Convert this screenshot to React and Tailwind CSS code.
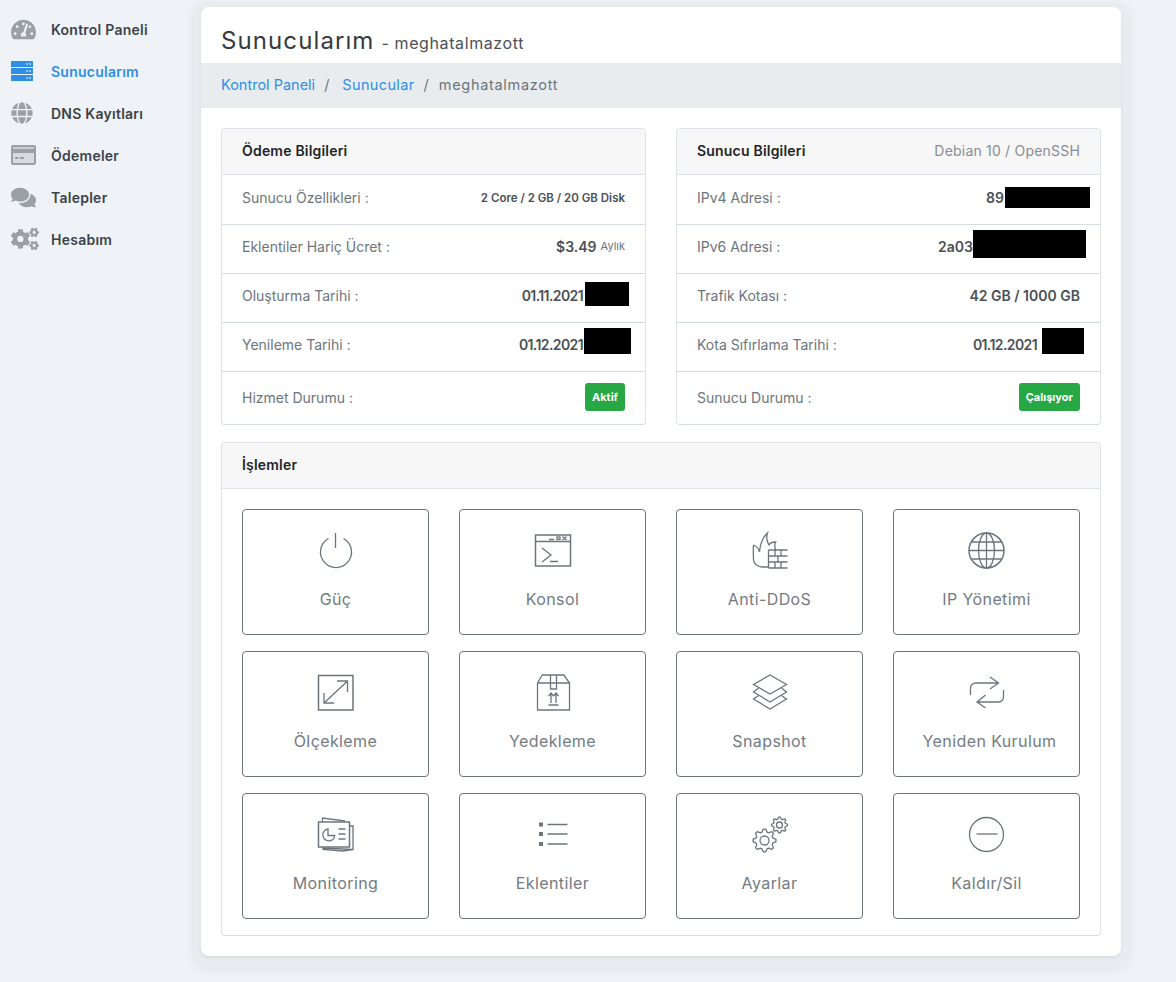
import { FaTachometerAlt, FaGlobe, FaComments, FaCogs } from 'react-icons/fa';

const font = 'font-["Inter","Liberation_Sans",sans-serif]';

const Icon = ({ children }) => (
  <svg width="40" height="40" viewBox="0 0 40 40" fill="none" stroke="#6c757d" strokeWidth="1.3" className="block">
    {children}
  </svg>
);

const gear = (cx, cy, r, teeth) => {
  const pts = [];
  for (let i = 0; i < teeth * 4; i++) {
    const a = (i / (teeth * 4)) * Math.PI * 2 - Math.PI / teeth / 4;
    const rad = i % 4 < 2 ? r : r * 0.76;
    pts.push(`${(cx + rad * Math.cos(a)).toFixed(2)},${(cy + rad * Math.sin(a)).toFixed(2)}`);
  }
  return pts.join(' ');
};

const icons = {
  power: (
    <Icon>
      <path d="M12.500 7.500A15.500 15.500 0 1 0 27.500 7.500" />
      <path d="M19.500 2v15" />
    </Icon>
  ),
  console: (
    <Icon>
      <rect x="2.500" y="4" width="35" height="31" strokeWidth="1.500" />
      <path d="M2.500 10.500h35M9 17l9 7-9 7M17 30.500h8" />
      <path d="M16 8.500h5M29.500 5.500l4 3.500M33.500 5.500l-4 3.500" />
      <rect x="24" y="6" width="3" height="2.500" />
    </Icon>
  ),
  ddos: (
    <Icon>
      <path d="M3.500 14C3 20 3.500 26 3.500 29C4 33 8 36 12 36H18.500" />
      <path d="M3.500 14C6 15 9 18 9.500 21C10 15 12 7 17.500 2C16 7 17 11 19 14C20 12 22 11 25.500 11C24 13 25 16 25.500 19" />
      <path d="M18.500 19h19M18.500 25h19M18.500 31h19M18.500 37h19M18.500 19v18M25 19v6M31 19v6M28 25v6M25 31v6M31 31v6" />
    </Icon>
  ),
  globe: (
    <Icon>
      <circle cx="19.500" cy="19.500" r="17.500" strokeWidth="1.500" />
      <ellipse cx="19.500" cy="19.500" rx="8" ry="17.500" />
      <path d="M19.500 2v35M2 19.500h35M4.500 11h30M4.500 28h30" />
    </Icon>
  ),
  scale: (
    <Icon>
      <rect x="2.500" y="2.500" width="34.500" height="34.500" strokeWidth="1.500" />
      <path d="M8 30 31.500 8M21 8h10.500v11M8 20v10h10" />
    </Icon>
  ),
  backup: (
    <Icon>
      <path d="M4.500 10 9.200 2h21.600l5.700 8v27h-32zM4.500 10h32" strokeLinejoin="round" />
      <path d="M17.500 2v14h6V2M15.500 32h10M18 30V20M15.500 23l2.500-3 2.500 3M23 30V20M20.500 23l2.500-3 2.500 3" />
    </Icon>
  ),
  layers: (
    <Icon>
      <path d="M20 2 36.500 11.500 20 21 3.500 11.500z" />
      <path d="M8.500 15 3.500 19 20 29 36.500 19 31.500 15" />
      <path d="M8.500 22.500 3.500 26 20 36 36.500 26 31.500 22.500" />
    </Icon>
  ),
  repeat: (
    <Icon>
      <path d="M3.500 22V15a5 5 0 0 1 5-5H31.500M23 4l8.500 6-8.500 6" />
      <path d="M36.500 17V24a5 5 0 0 1-5 5H10M18.500 22l-8.500 7 8.500 6" />
    </Icon>
  ),
  monitoring: (
    <Icon>
      <path d="M6.500 7V3L29 6M33.500 11H37V34.500L7 33v1.500l19.500 1.500L37 34.500" />
      <path d="M2.500 7h31v25h-31z" strokeWidth="1.500" />
      <path d="M12 14a6 6 0 1 0 6.800 6.500H12z" />
      <path d="M22.500 14h7M22.500 19h7M22.500 24h7" />
    </Icon>
  ),
  list: (
    <Icon>
      <rect x="6" y="7.500" width="4" height="4" fill="#6c757d" stroke="none" />
      <rect x="6" y="17" width="4" height="4" fill="#6c757d" stroke="none" />
      <rect x="6" y="27" width="4" height="4" fill="#6c757d" stroke="none" />
      <path d="M14.500 9.500h20M14.500 19h20M14.500 29h20" />
    </Icon>
  ),
  settings: (
    <Icon>
      <polygon points={gear(14.5, 25.5, 11.5, 8)} strokeLinejoin="round" />
      <circle cx="14.500" cy="25.500" r="4.500" />
      <polygon points={gear(29.5, 10, 8, 8)} strokeLinejoin="round" />
      <circle cx="29.500" cy="10" r="3" />
    </Icon>
  ),
  remove: (
    <Icon>
      <circle cx="19.500" cy="19.500" r="17" />
      <path d="M9.500 19h21" />
    </Icon>
  ),
};

const ServerIcon = () => (
  <svg width="22" height="20" viewBox="0 0 22 20" className="block">
    <g fill="#2f8fe8">
      <rect x="0" y="0" width="22" height="6" rx="0.500" />
      <rect x="0" y="7" width="22" height="6" rx="0.500" />
      <rect x="0" y="14" width="22" height="6" rx="0.500" />
    </g>
    <path d="M15 3h2M18 3h2M15 10h2M18 10h2M15 17h2M18 17h2" stroke="#fff" strokeWidth="1" />
  </svg>
);

const CardIcon = () => (
  <svg width="25" height="20" viewBox="0 0 25 20" className="block">
    <rect x="0" y="0" width="25" height="20" rx="2" fill="#9aa0a6" />
    <rect x="2" y="2" width="21" height="2" fill="#c9ced3" />
    <rect x="2" y="8" width="21" height="10" fill="#d7dade" />
    <path d="M4 12h3.500v2H4zM9 12h4v2H9z" fill="#9aa0a6" />
  </svg>
);

const navItems = [
  { label: 'Kontrol Paneli', icon: <FaTachometerAlt size={25} color="#9aa0a6" /> },
  { label: 'Sunucularım', icon: <ServerIcon />, active: true },
  { label: 'DNS Kayıtları', icon: <FaGlobe size={22} color="#9aa0a6" /> },
  { label: 'Ödemeler', icon: <CardIcon /> },
  { label: 'Talepler', icon: <FaComments size={25} color="#9aa0a6" /> },
  { label: 'Hesabım', icon: <FaCogs size={28} color="#9aa0a6" /> },
];

const tiles = [
  ['Güç', 'power'],
  ['Konsol', 'console'],
  ['Anti-DDoS', 'ddos'],
  ['IP Yönetimi', 'globe'],
  ['Ölçekleme', 'scale'],
  ['Yedekleme', 'backup'],
  ['Snapshot', 'layers'],
  ['Yeniden Kurulum', 'repeat', 'ml-[6px]'],
  ['Monitoring', 'monitoring'],
  ['Eklentiler', 'list'],
  ['Ayarlar', 'settings'],
  ['Kaldır/Sil', 'remove'],
];

const Row = ({ label, children, last, first }) => (
  <div
    className={`flex items-center justify-between px-5 ${
      last ? 'h-[52px] pb-[2px]' : `${first ? 'h-[50px]' : 'h-[49px]'} border-b border-[#d3dbe6] pb-[5px]`
    }`}
  >
    <span className="text-[14px] text-[#6c757d]">{label}</span>
    <div className="flex items-center">{children}</div>
  </div>
);

const Value = ({ children, date }) => (
  <span className={`text-[14px] font-semibold text-[#495057] ${date ? 'tracking-[-0.6px]' : ''}`}>{children}</span>
);

const Badge = ({ children }) => (
  <span className="rounded-[3px] bg-[#28a745] px-[7px] py-[7px] text-[11px] leading-[14px] font-bold text-white">{children}</span>
);

const Panel = ({ title, right, children }) => (
  <div className="overflow-hidden rounded-[4px] border border-[#dfe3e8] border-b-[#d3dbe6] bg-white">
    <div className="flex h-[46px] items-center justify-between border-b border-[#dfe3e8] bg-[#f7f7f7] px-5 pb-[2px]">
      <span className="text-[14px] font-semibold tracking-[0.2px] text-[#212529]">{title}</span>
      {right && <span className="text-[14px] tracking-[0.2px] text-[#868e96]">{right}</span>}
    </div>
    {children}
  </div>
);

export default function App() {
  return (
    <div className={`flex h-[982px] overflow-hidden bg-[#eff3f8] ${font}`}>
      {/* Sidebar */}
      <aside className="w-[201px] shrink-0 pt-[8px]">
        {navItems.map((item) => (
          <div key={item.label} className="flex h-[42px] items-center">
            <div className="ml-[11px] flex w-[40px] shrink-0 items-center justify-start">{item.icon}</div>
            <span className={`text-[14px] font-semibold tracking-[0.25px] ${item.active ? 'text-[#2f8fe8]' : 'text-[#3d4349]'}`}>{item.label}</span>
          </div>
        ))}
      </aside>

      {/* Main */}
      <main className="mt-[7px] h-[949px] w-[920px] shrink-0 rounded-[8px] bg-white shadow-[0_2px_3px_0_#d9dce0,0_5px_1px_10px_#e8ebef,0_5px_3px_14px_#ecEff3]">
        <div className="flex h-[56px] items-end px-5 pb-[6px]">
          <h1 className="text-[24px] leading-[32px] tracking-[1.1px] text-[#343a40]">Sunucularım</h1>
          <span className="mb-[2px] ml-[7px] text-[16px] tracking-[0.6px] text-[#495057]">- meghatalmazott</span>
        </div>
        <div className="flex h-[45px] items-center bg-[#e9ecef] px-5 pb-[2px] text-[14.500px]">
          <span className="text-[#2f8fe8]">Kontrol Paneli</span>
          <span className="mx-[9px] text-[#6c757d]">/</span>
          <span className="ml-[4px] tracking-[0.35px] text-[#2f8fe8]">Sunucular</span>
          <span className="mx-[9px] text-[#6c757d]">/</span>
          <span className="ml-[1px] tracking-[0.7px] text-[#6c757d]">meghatalmazott</span>
        </div>

        <div className="p-5">
          <div className="grid grid-cols-2 gap-[30px]">
            <Panel title="Ödeme Bilgileri">
              <Row first label="Sunucu Özellikleri :">
                <span className="mt-[4px] text-[11.500px] font-semibold text-[#495057]">2 Core / 2 GB / 20 GB Disk</span>
              </Row>
              <Row label="Eklentiler Hariç Ücret :">
                <Value>$3.49</Value>
                <span className="ml-1 text-[11px] text-[#6c757d]">Aylık</span>
              </Row>
              <Row label="Oluşturma Tarihi :">
                <Value date>01.11.2021</Value>
                <div className="mr-[-4px] mb-[3px] ml-[2px] h-[24px] w-[44px] bg-black" />
              </Row>
              <Row label="Yenileme Tarihi :">
                <Value date>01.12.2021</Value>
                <div className="mr-[-6px] mb-[7px] ml-[1px] h-[26px] w-[47px] bg-black" />
              </Row>
              <Row label="Hizmet Durumu :" last>
                <Badge>Aktif</Badge>
              </Row>
            </Panel>

            <Panel title="Sunucu Bilgileri" right="Debian 10 / OpenSSH">
              <Row first label="IPv4 Adresi :">
                <Value>89</Value>
                <div className="mr-[-10px] ml-[1px] h-[21px] w-[85px] bg-black" />
              </Row>
              <Row label="IPv6 Adresi :">
                <Value>2a03</Value>
                <div className="mr-[-6px] mb-[5px] h-[28px] w-[113px] bg-black" />
              </Row>
              <Row label="Trafik Kotası :">
                <Value>42 GB / 1000 GB</Value>
              </Row>
              <Row label="Kota Sıfırlama Tarihi :">
                <Value date>01.12.2021</Value>
                <div className="mr-[-4px] mb-[7px] ml-[5px] h-[26px] w-[42px] bg-black" />
              </Row>
              <Row label="Sunucu Durumu :" last>
                <Badge>Çalışıyor</Badge>
              </Row>
            </Panel>
          </div>

          <div className="mt-[17px]">
            <Panel title="İşlemler">
              <div className="grid grid-cols-4 gap-x-[30px] gap-y-4 px-5 pt-5 pb-4">
                {tiles.map(([label, icon, extra]) => (
                  <div key={label} className="flex h-[126px] flex-col items-center rounded-[4px] border border-[#6c757d] pt-[21px]">
                    <div className="h-[40px] w-[40px]">{icons[icon]}</div>
                    <span className={`mt-[16px] text-[16px] leading-6 tracking-[0.4px] text-[#737b83] ${extra || ''}`}>{label}</span>
                  </div>
                ))}
              </div>
            </Panel>
          </div>
        </div>
      </main>
    </div>
  );
}
